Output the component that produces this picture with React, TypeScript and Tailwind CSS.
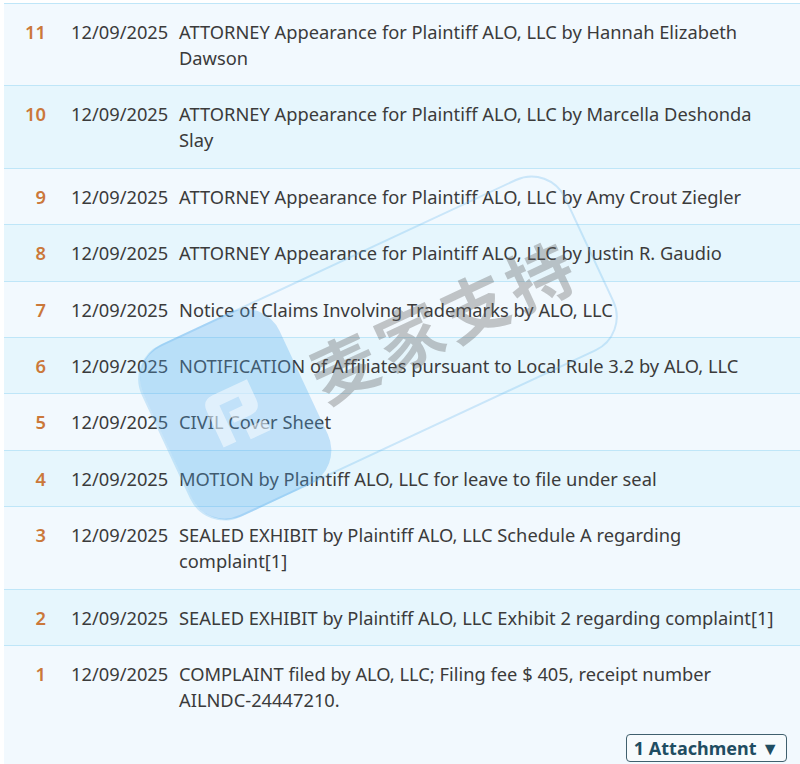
import React from "react";

type Entry = { no: number; date: string; text: string; attachments?: number };

const entries: Entry[] = [
    { no: 11, date: "12/09/2025", text: "ATTORNEY Appearance for Plaintiff ALO, LLC by Hannah Elizabeth Dawson" },
    { no: 10, date: "12/09/2025", text: "ATTORNEY Appearance for Plaintiff ALO, LLC by Marcella Deshonda Slay" },
    { no: 9, date: "12/09/2025", text: "ATTORNEY Appearance for Plaintiff ALO, LLC by Amy Crout Ziegler" },
    { no: 8, date: "12/09/2025", text: "ATTORNEY Appearance for Plaintiff ALO, LLC by Justin R. Gaudio" },
    { no: 7, date: "12/09/2025", text: "Notice of Claims Involving Trademarks by ALO, LLC" },
    { no: 6, date: "12/09/2025", text: "NOTIFICATION of Affiliates pursuant to Local Rule 3.2 by ALO, LLC" },
    { no: 5, date: "12/09/2025", text: "CIVIL Cover Sheet" },
    { no: 4, date: "12/09/2025", text: "MOTION by Plaintiff ALO, LLC for leave to file under seal" },
    { no: 3, date: "12/09/2025", text: "SEALED EXHIBIT by Plaintiff ALO, LLC Schedule A regarding complaint[1]" },
    { no: 2, date: "12/09/2025", text: "SEALED EXHIBIT by Plaintiff ALO, LLC Exhibit 2 regarding complaint[1]" },
    {
        no: 1,
        date: "12/09/2025",
        text: "COMPLAINT filed by ALO, LLC; Filing fee $ 405, receipt number AILNDC-24447210.",
        attachments: 1,
    },
];

// keep hyphenated tokens (receipt numbers) on one line
function Words({ text }: { text: string }) {
    const parts = text.split(" ");
    return (
        <>
            {parts.map((w, i) => (
                <React.Fragment key={i}>
                    {w.includes("-") ? <span className="whitespace-nowrap">{w}</span> : w}
                    {i < parts.length - 1 ? " " : ""}
                </React.Fragment>
            ))}
        </>
    );
}

function Watermark() {
    return (
        <div className="pointer-events-none absolute left-[378px] top-[348px] -translate-x-1/2 -translate-y-1/2 -rotate-[25deg]">
            <div className="flex h-[190px] w-[468px] items-center gap-[10px] rounded-[38px] border-2 border-[rgba(110,185,240,0.3)] pr-[20px]">
                <div className="flex h-[190px] w-[150px] shrink-0 items-center justify-center rounded-[38px] bg-[rgba(80,170,240,0.3)]">
                    <svg width="90" height="90" viewBox="0 0 90 90" fill="none">
                        <path
                            d="M20 70 L20 30 Q20 18 32 18 L70 18 L70 40 Q70 52 58 52 L40 52 L40 40 L55 40 L55 30 L34 30 L34 70 Z"
                            fill="rgba(255,255,255,0.5)"
                        />
                        <path d="M48 62 L70 62 L70 74 L48 74 Z" fill="rgba(255,255,255,0.5)" />
                    </svg>
                </div>
                <span className="whitespace-nowrap text-[66px] font-bold leading-none tracking-[6px] text-[rgba(100,100,100,0.36)] [font-family:'Noto_Sans_CJK_SC',sans-serif]">
                    麦家支持
                </span>
            </div>
        </div>
    );
}

export default function App() {
    return (
        <div className="relative h-[764px] w-[800px] overflow-hidden bg-white pl-[4px] pt-[3px] text-[18.3px] text-[#3b3b3b] [font-family:'Noto_Sans','Open_Sans',sans-serif]">
            <div className="border-t border-[#bfe6f8]">
                {entries.map((e, i) => (
                    <div
                        key={e.no}
                        className={`border-b border-[#bfe6f8] ${i % 2 === 0 ? "bg-[#f2f9fe]" : "bg-[#e6f6fd]"} ${e.attachments ? "pb-[60px]" : ""}`}
                    >
                        <div className="flex pt-[15px] pb-[14.4px] leading-[26px]">
                            <div className="w-[42px] shrink-0 text-right font-semibold text-[#cb783a]">{e.no}</div>
                            <div className="w-[133px] shrink-0 pl-[25px]">{e.date}</div>
                            <div className="flex-1 pr-[15px]">
                                <Words text={e.text} />
                            </div>
                        </div>
                        {e.attachments && (
                            <div className="mt-[7px] flex justify-end pr-[13px]">
                                <button className="rounded-[4px] border border-[#40606e] bg-[#f7fbfd] px-[7px] py-0 text-[18px] font-bold leading-[26px] text-[#1f4d62]">
                                    {e.attachments} Attachment ▼
                                </button>
                            </div>
                        )}
                    </div>
                ))}
            </div>
            <Watermark />
        </div>
    );
}
